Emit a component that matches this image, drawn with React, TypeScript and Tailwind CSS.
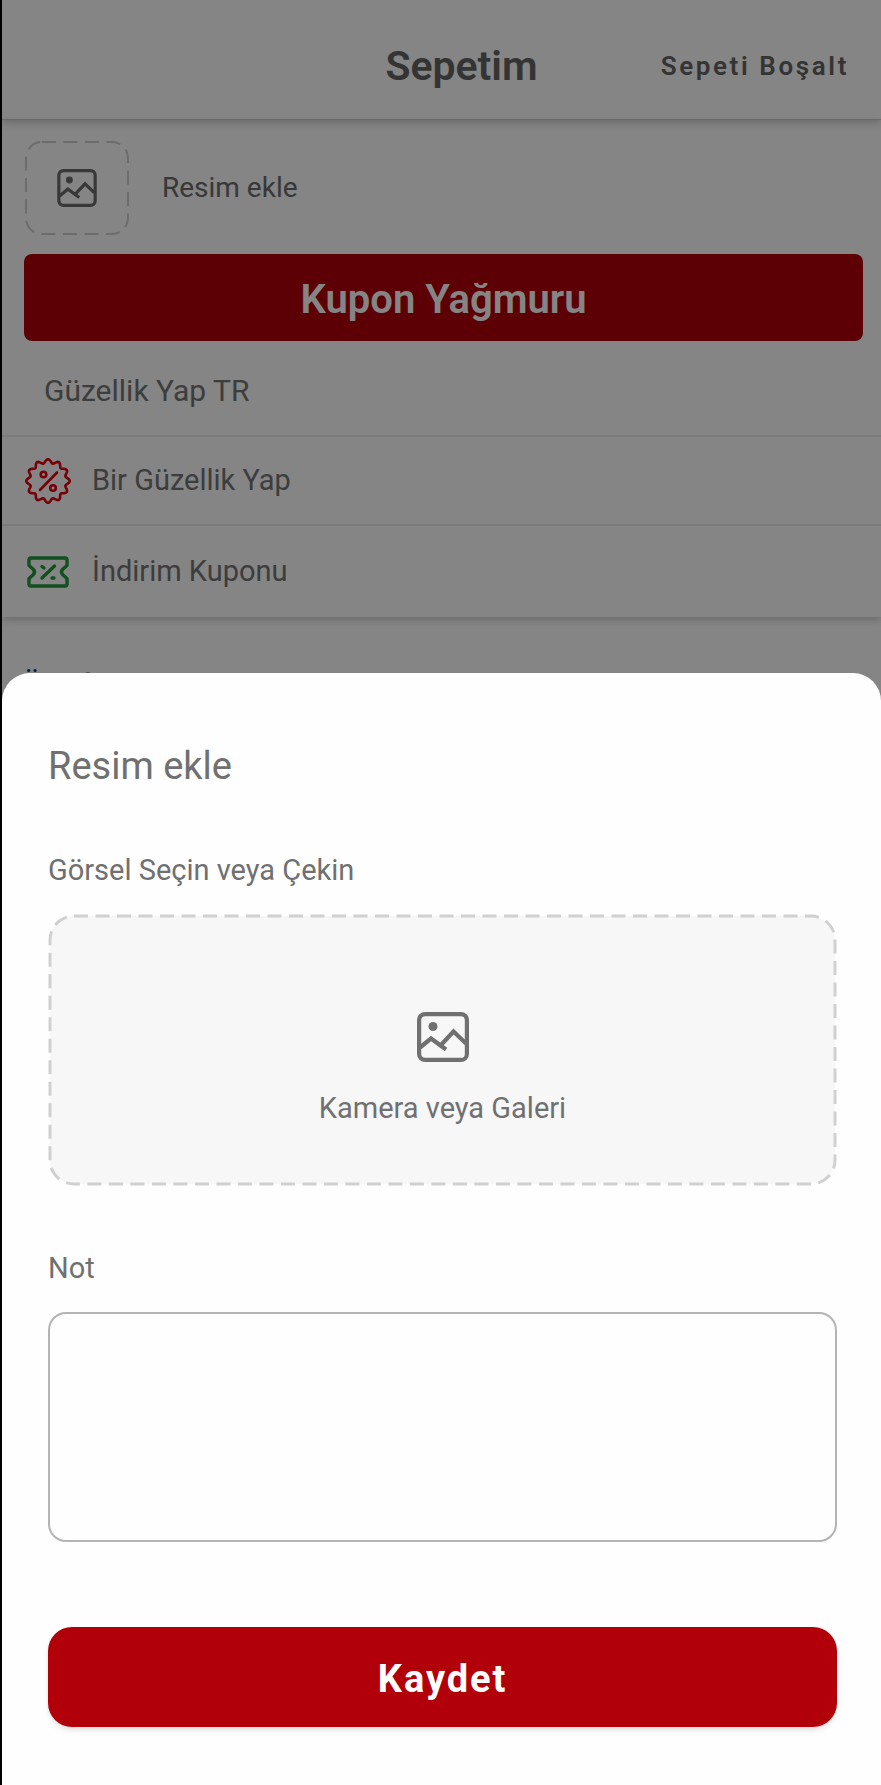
import React from 'react';

type IconProps = { className?: string };

const ImageIcon = ({ className }: IconProps) => (
  <svg viewBox="0 0 52 50" fill="none" stroke="currentColor" strokeWidth="4.2" className={className} aria-hidden="true">
    <rect x="2.1" y="2.1" width="47.8" height="45.8" rx="6" />
    <circle cx="16" cy="14.5" r="4.5" fill="currentColor" stroke="none" />
    <path d="M3 35.5 14 26.5 29 37.5M23.5 33.5 36.5 19.5 49 31.5" />
  </svg>
);

// twelve-lobed rosette
const badgePath = () => {
  const points: string[] = [];
  for (let i = 0; i <= 144; i++) {
    const angle = (i / 144) * Math.PI * 2;
    const radius = 19.9 + 1.9 * Math.cos(angle * 12);
    points.push(`${(24 + radius * Math.sin(angle)).toFixed(2)} ${(24 - radius * Math.cos(angle)).toFixed(2)}`);
  }
  return `M${points.join('L')}Z`;
};

const DiscountBadgeIcon = ({ className }: IconProps) => (
  <svg viewBox="0 0 48 48" fill="none" stroke="currentColor" strokeWidth="2.6" strokeLinecap="round" strokeLinejoin="round" className={className} aria-hidden="true">
    <path d={badgePath()} />
    <path d="M33 15.5 16 33" />
    <circle cx="19.5" cy="17.5" r="2.8" />
    <circle cx="29" cy="31" r="2.8" />
  </svg>
);

const CouponIcon = ({ className }: IconProps) => (
  <svg viewBox="0 0 42 32" fill="none" stroke="currentColor" strokeWidth="3.4" strokeLinecap="round" strokeLinejoin="round" className={className} aria-hidden="true">
    <path d="M4 2H38Q40 2 40 4V9.5L36 13Q33 16 36 19L40 22.5V28Q40 30 38 30H4Q2 30 2 28V22.5L6 19Q9 16 6 13L2 9.5V4Q2 2 4 2Z" />
    <path d="M27.5 10 15 22M15 10.5 17 12M25 22H27" />
  </svg>
);

type DashedFrameProps = { radius: number; stroke: number; fill: string };

const DashedFrame = ({ radius, stroke, fill }: DashedFrameProps) => (
  <span className="absolute inset-0.5" aria-hidden="true">
    <svg className="block size-full overflow-visible">
      <rect width="100%" height="100%" rx={radius} fill={fill} stroke="#d0d0d0" strokeWidth={stroke} strokeDasharray="14 7.5" />
    </svg>
  </span>
);

const CartPage = () => (
  <div className="min-h-screen bg-white text-[#757575]">
    <header className="grid h-30 grid-cols-[1fr_auto_1fr] items-center border-b border-[#d0d0d0] pl-18 pr-8 pt-3 shadow-[0_3px_8px_rgba(0,0,0,0.2)]">
      <h1 className="col-start-2 text-[41px] font-semibold leading-12 text-[#646464]">Sepetim</h1>
      <button type="button" className="justify-self-end text-[26px] font-semibold leading-8 tracking-widest text-[#646464]">
        Sepeti Boşalt
      </button>
    </header>

    <main>
      <section className="shadow-[0_3px_8px_rgba(0,0,0,0.2)]">
        <div className="pl-[22px] pr-[18px] pt-5">
          <button type="button" className="flex items-center gap-8 text-[28px] leading-8 text-[#6b6b6b]">
            <span className="relative flex h-24 w-[106px] items-center justify-center">
              <DashedFrame radius={16} stroke={2} fill="none" />
              <ImageIcon className="h-[38px] w-10" />
            </span>
            Resim ekle
          </button>
          <button
            type="button"
            className="mt-[18px] block h-[87px] w-full rounded-lg bg-[#b1000a] pt-1 text-[40px] font-semibold text-white"
          >
            Kupon Yağmuru
          </button>
        </div>
        <p className="border-b-2 border-[#eeeeee] px-[42px] pb-6 pt-[30px] text-[30px] leading-10">Güzellik Yap TR</p>
        <a href="#guzellik" className="flex h-[89px] items-center gap-5 border-b-2 border-[#eeeeee] px-[22px] text-[29px]">
          <DiscountBadgeIcon className="size-12 text-[#e0000c]" />
          Bir Güzellik Yap
        </a>
        <a href="#kupon" className="flex h-[91px] items-center gap-5 px-[22px] text-[29px]">
          <CouponIcon className="h-8 w-12 text-[#23983c]" />
          İndirim Kuponu
        </a>
      </section>
      <h2 className="px-5 pt-12 text-[30px] leading-10 text-[#30304e]">Üye fiyatı</h2>
    </main>
  </div>
);

const AddImageSheet = () => (
  <form
    role="dialog"
    aria-labelledby="sheet-title"
    className="flex flex-col rounded-t-[28px] bg-[#fefefe] pb-[58px] pl-[46px] pr-[44px] pt-[65px] text-[#707070]"
  >
    <h2 id="sheet-title" className="text-[38px] leading-14">Resim ekle</h2>

    <h3 id="picker-label" className="mt-14 text-[29px] leading-10">Görsel Seçin veya Çekin</h3>
    <button
      type="button"
      aria-describedby="picker-label"
      className="relative mt-6 flex h-68 flex-col items-center justify-center gap-[26px] pt-10 text-[29px] leading-10"
    >
      <DashedFrame radius={24} stroke={3} fill="#f7f7f7" />
      <ImageIcon className="relative h-[50px] w-13" />
      <span className="relative">Kamera veya Galeri</span>
    </button>

    <label htmlFor="note" className="mt-[62px] text-[29px] leading-10">Not</label>
    <textarea
      id="note"
      className="mt-6 h-[230px] resize-none rounded-[18px] border-2 border-[#b4b4b4] p-4 text-[29px] outline-none"
    />

    <button
      type="submit"
      className="mt-[85px] h-25 rounded-3xl bg-[#b1000a] pt-1 text-[38px] font-bold tracking-wider text-white shadow-md"
    >
      Kaydet
    </button>
  </form>
);

const App = () => {
  return (
    <div className="relative min-h-screen overflow-hidden border-l-2 border-black font-[Roboto,sans-serif]">
      <CartPage />
      <div className="absolute inset-0 flex flex-col justify-end bg-black/48">
        <AddImageSheet />
      </div>
    </div>
  );
};

export default App;
